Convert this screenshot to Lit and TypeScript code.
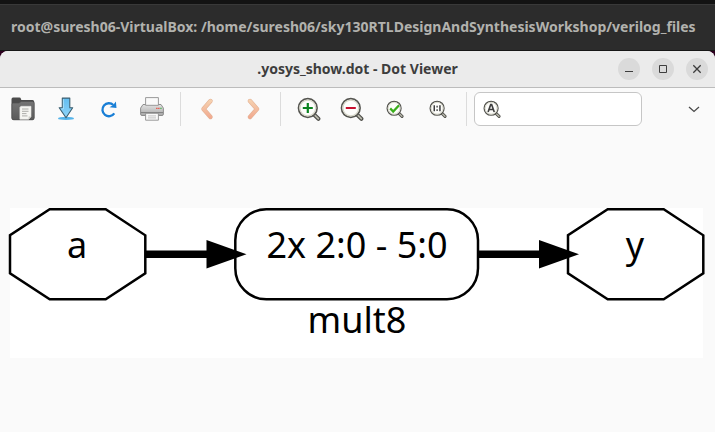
import { LitElement, html, svg, css } from "lit";
import { customElement } from "lit/decorators.js";

const lens = (glyph: unknown, size: number) => html`
  <svg class="icon" width=${size} height=${size} viewBox="0 0 24 24" aria-hidden="true">
    <path d="M17 17.5 L21.4 21.8" stroke="#4d4d48" stroke-width="4" stroke-linecap="round" />
    <path d="M17.2 17.6 L21.3 21.7" stroke="#b9b9ac" stroke-width="1.8" stroke-linecap="round" />
    <circle cx="10.8" cy="11" r="9.3" fill="#fdfdfb" stroke="#555550" stroke-width="1.7" />
    <circle cx="10.8" cy="11" r="7.9" fill="none" stroke="#d6d6c8" stroke-width="1.3" />
    ${glyph}
  </svg>`;

const plus = svg`<path d="M10.800 6v10M5.800 11h10" stroke="#0b8420" stroke-width="2.200" />`;
const minus = svg`<path d="M5.800 11h10" stroke="#c8102e" stroke-width="2.200" />`;
const tick = svg`<path d="M5.600 11.200l4 4.200 7.800-8.400" fill="none" stroke="#3aae1c" stroke-width="3" />`;
const oneToOne = svg`<path d="M7 7v8M14.600 7v8" stroke="#333" stroke-width="1.900" /><path d="M10.800 7.600v2.400M10.800 12.400v2.400" stroke="#333" stroke-width="1.700" />`;
const letterMark = svg`<path d="M6.800 16L10.300 6h1.200L15 16M8.200 12.600h5.400" fill="none" stroke="#3f3f3f" stroke-width="2.200" />`;

const folder = html`
  <svg class="icon" width="24" height="24" viewBox="0 0 24 24" aria-hidden="true">
    <defs><linearGradient id="f" x1="0" y1="0" x2="0" y2="1"><stop offset="0" stop-color="#747474" /><stop offset="1" stop-color="#5a5a5a" /></linearGradient></defs>
    <path d="M.5 21V2.200Q.5.600 2 .600h6.400Q9.600.600 10 2l.3 1h11.200q1.700 0 1.700 1.700V21q0 2-2 2H2.500q-2 0-2-2z" fill="#4b4b4b" />
    <path d="M1 7.400Q1 6 2.400 6H8l2.200-1.600h11.200q1.800 0 1.800 1.800V21q0 1.800-1.800 1.800H2.800Q1 22.800 1 21z" fill="url(#f)" stroke="#505050" stroke-width=".7" />
    <path d="M10 9.300h10v10.400l-2.300 2.600H8.900V10.400z" fill="#f5f5f1" stroke="#e4e4e0" stroke-width=".6" />
    <path d="M20 19.600l-2.400 2.700v-2.700z" fill="#c9c9c4" />
    <path d="M11 12h6.500M11 14.300h6.500M11 16.600h4.500M11 18.900h5.500" stroke="#a5a5a0" stroke-width=".9" />
  </svg>`;

const download = html`
  <svg class="icon" width="24" height="24" viewBox="0 0 24 24" aria-hidden="true">
    <defs><linearGradient id="d" x1="0" y1="0" x2="0" y2="1"><stop offset="0" stop-color="#62bdf0" /><stop offset="1" stop-color="#8fd4f8" /></linearGradient></defs>
    <ellipse cx="12" cy="21.400" rx="8" ry="1.700" fill="#55b4ea" />
    <path d="M8.300 1.100h7.500v9.700h2.900L12 20.700 5.200 10.800h3.100z" fill="url(#d)" stroke="#3d5f70" stroke-width="1.100" stroke-linejoin="round" />
    <path d="M9.400 2.200v9.700H7.300" fill="none" stroke="#b4e4fb" stroke-width=".8" />
  </svg>`;

const refresh = html`
  <svg class="icon" width="24" height="24" viewBox="0 0 24 24" aria-hidden="true">
    <path d="M16.400 8A6.500 6.500 0 1 0 17.300 16.400" fill="none" stroke="#1a7fd6" stroke-width="2.300" />
    <path d="M18.900 4.600l.6 6.400-7-.7q4.200-1.500 6.400-5.700z" fill="#1a7fd6" />
  </svg>`;

const printer = html`
  <svg class="icon" width="24" height="24" viewBox="0 0 24 24" aria-hidden="true">
    <defs><linearGradient id="p" x1="0" y1="0" x2="0" y2="1"><stop offset="0" stop-color="#e2e2e2" /><stop offset="1" stop-color="#a9a9a9" /></linearGradient></defs>
    <path d="M3 7.500h18l2.400 3.600v6q0 1.400-1.400 1.400H2Q.6 18.500.6 17.100v-6z" fill="url(#p)" stroke="#858585" stroke-width=".9" />
    <path d="M5.600 8.300V.6h12.800v7.700z" fill="#fafafa" stroke="#8f8f8f" stroke-width=".9" />
    <path d="M1 15.600h22" stroke="#7e7e7e" stroke-width="1" />
    <path d="M5.600 16.300h12.800v6.900H5.600z" fill="#f9f9f9" stroke="#8f8f8f" stroke-width=".9" />
    <path d="M8 18.900h8M8 20.900h8" stroke="#b5b5b5" stroke-width=".8" />
    <path d="M16.200 11.400h1.300M18.200 11.400h1.300" stroke="#ec4b3c" stroke-width="1.300" />
    <path d="M20.300 11.400h1.300" stroke="#43b649" stroke-width="1.300" />
  </svg>`;

const arrow = (d: string, id: string) => html`
  <svg class="icon" width="24" height="24" viewBox="0 0 24 24" aria-hidden="true">
    <defs><linearGradient id=${id} gradientUnits="userSpaceOnUse" x1="0" y1="2" x2="0" y2="22"><stop offset="0" stop-color="#f6d4b2" /><stop offset="1" stop-color="#f1a78d" /></linearGradient></defs>
    <path d=${d} fill="none" stroke="#e3b295" stroke-width="4.400" stroke-linecap="round" stroke-linejoin="round" />
    <path d=${d} fill="none" stroke="url(#${id})" stroke-width="3.400" stroke-linecap="round" stroke-linejoin="round" />
  </svg>`;

@customElement("dot-graph")
export class DotGraph extends LitElement {
  static styles = css`
    :host { display: block; background: #fff; }
    .drawing { display: block; width: 100%; overflow: visible; }
    .outline { fill: none; stroke: #000; stroke-width: 2.5; }
    .edge { stroke: #000; stroke-width: 7.5; }
    .label { font: 36px "Noto Sans", sans-serif; text-anchor: middle; }
  `;

  private port(x: number, name: string) {
    return svg`<g transform="translate(${x} 0)">
      <path class="outline" d="M39.700 1.300H95.700L135.300 27.300V65.300L95.700 91.200H39.700L0 65.300V27.300z" />
      <text class="label" x="67" y="50">${name}</text>
    </g>`;
  }

  private edge(x: number) {
    return svg`<g transform="translate(${x} 0)">
      <path class="edge" d="M0 46.200H62" />
      <path d="M61 32L101 46.200 61 60.500z" />
    </g>`;
  }

  render() {
    return html`
      <svg class="drawing" viewBox="0 0 693 150" role="img" aria-label="mult8: a to y">
        ${this.port(0, "a")}
        <rect class="outline" x="225.300" y="1.300" width="242.700" height="90" rx="31" />
        <text class="label" x="347" y="50">2x 2:0 - 5:0</text>
        <text class="label" x="347" y="125">mult8</text>
        ${this.port(558, "y")} ${this.edge(135.5)} ${this.edge(468)}
      </svg>`;
  }
}

@customElement("app-root")
export class AppRoot extends LitElement {
  static styles = css`
    :host {
      display: flex;
      flex-direction: column;
      min-height: 100vh;
      background: #2c001e;
      font-family: "Noto Sans", sans-serif;
      box-sizing: border-box;
    }
    .terminal {
      box-sizing: border-box;
      height: 51px;
      border-top: 4px solid #131313;
      border-bottom: 1px solid #161616;
      background: #2c2c2c;
      box-shadow: inset 0 1px #393939;
      padding: 0 11px;
      color: #b2b2ae;
      font-size: 14px;
      font-weight: 700;
      line-height: 46px;
      white-space: nowrap;
      overflow: hidden;
    }
    .window {
      flex: 1;
      display: flex;
      flex-direction: column;
      border-radius: 8px 8px 0 0;
      background: #fafafa;
      overflow: hidden;
    }
    .titlebar {
      display: grid;
      grid-template-columns: 1fr auto 1fr;
      align-items: center;
      height: 36px;
      padding: 0 7px;
      background: #ebebeb;
      border-bottom: 1px solid #bcbcbc;
    }
    .title {
      grid-column: 2;
      margin: 0;
      font-size: 14px;
      font-weight: 700;
      line-height: 20px;
      color: #3d3d3d;
      white-space: nowrap;
    }
    .controls { display: flex; justify-content: flex-end; gap: 12px; }
    button {
      display: flex;
      align-items: center;
      justify-content: center;
      padding: 0;
      border: 0;
      background: none;
      color: inherit;
      font: inherit;
    }
    .control { width: 22px; height: 22px; border-radius: 50%; background: #dadada; }
    .icon { display: block; flex: none; }
    .toolbar { display: flex; align-items: center; padding: 4px 0 8px 1px; }
    .group { display: flex; flex: none; }
    .nav { gap: 8px; }
    .tool { width: 43px; height: 34px; }
    .nav .tool { width: 39px; }
    .separator { flex: none; width: 1px; height: 34px; margin: 0 6px 0 7px; background: #dcdcdc; }
    .search {
      display: flex;
      align-items: center;
      gap: 6px;
      box-sizing: border-box;
      flex: 0 1 168px;
      min-width: 0;
      height: 34px;
      margin-left: 1px;
      padding: 0 8px;
      border: 1px solid #c6c6c6;
      border-radius: 6px;
      background: #fff;
    }
    .field { flex: 1; min-width: 0; padding: 0; border: 0; outline: 0; background: none; font: inherit; font-size: 14px; }
    .more { margin-left: auto; }
    .canvas { flex: 1; display: flex; align-items: center; padding: 0 12px 0 10px; }
    .graph { flex: 1; }
  `;

  private tool(label: string, icon: unknown) {
    return html`<button class="tool" type="button" aria-label=${label}>${icon}</button>`;
  }

  render() {
    return html`
      <header class="terminal">root@suresh06-VirtualBox: /home/suresh06/sky130RTLDesignAndSynthesisWorkshop/verilog_files</header>
      <section class="window">
        <div class="titlebar">
          <h1 class="title">.yosys_show.dot - Dot Viewer</h1>
          <div class="controls">
            <button class="control" type="button" aria-label="Minimize">
              <svg class="icon" width="10" height="10" viewBox="0 0 10 10"><path d="M1 7.500h8" stroke="#3d3d3d" /></svg>
            </button>
            <button class="control" type="button" aria-label="Maximize">
              <svg class="icon" width="10" height="10" viewBox="0 0 10 10"><path d="M1.500 1.500h7v7h-7z" fill="none" stroke="#3d3d3d" /></svg>
            </button>
            <button class="control" type="button" aria-label="Close">
              <svg class="icon" width="10" height="10" viewBox="0 0 10 10"><path d="M1.300 1.300l7.400 7.400M8.700 1.300L1.300 8.700" stroke="#3d3d3d" stroke-width="1.300" /></svg>
            </button>
          </div>
        </div>
        <div class="toolbar">
          <div class="group">
            ${this.tool("Open", folder)} ${this.tool("Export", download)}
            ${this.tool("Reload", refresh)} ${this.tool("Print", printer)}
          </div>
          <div class="separator"></div>
          <div class="group nav">
            ${this.tool("Back", arrow("M15.500 4L8.500 12l7 8", "b"))}
            ${this.tool("Forward", arrow("M8 4l7 8-7 8", "n"))}
          </div>
          <div class="separator"></div>
          <div class="group">
            ${this.tool("Zoom in", lens(plus, 24))} ${this.tool("Zoom out", lens(minus, 24))}
            ${this.tool("Zoom to fit", lens(tick, 18))} ${this.tool("Zoom to 100%", lens(oneToOne, 18))}
          </div>
          <div class="separator"></div>
          <label class="search">
            ${lens(letterMark, 18)}
            <input class="field" type="text" aria-label="Find" />
          </label>
          <button class="tool more" type="button" aria-label="More">
            <svg class="icon" width="12" height="12" viewBox="0 0 12 12"><path d="M1 4l5 4.500L11 4" fill="none" stroke="#4a4a4a" stroke-width="1.300" /></svg>
          </button>
        </div>
        <main class="canvas"><dot-graph class="graph"></dot-graph></main>
      </section>`;
  }
}
